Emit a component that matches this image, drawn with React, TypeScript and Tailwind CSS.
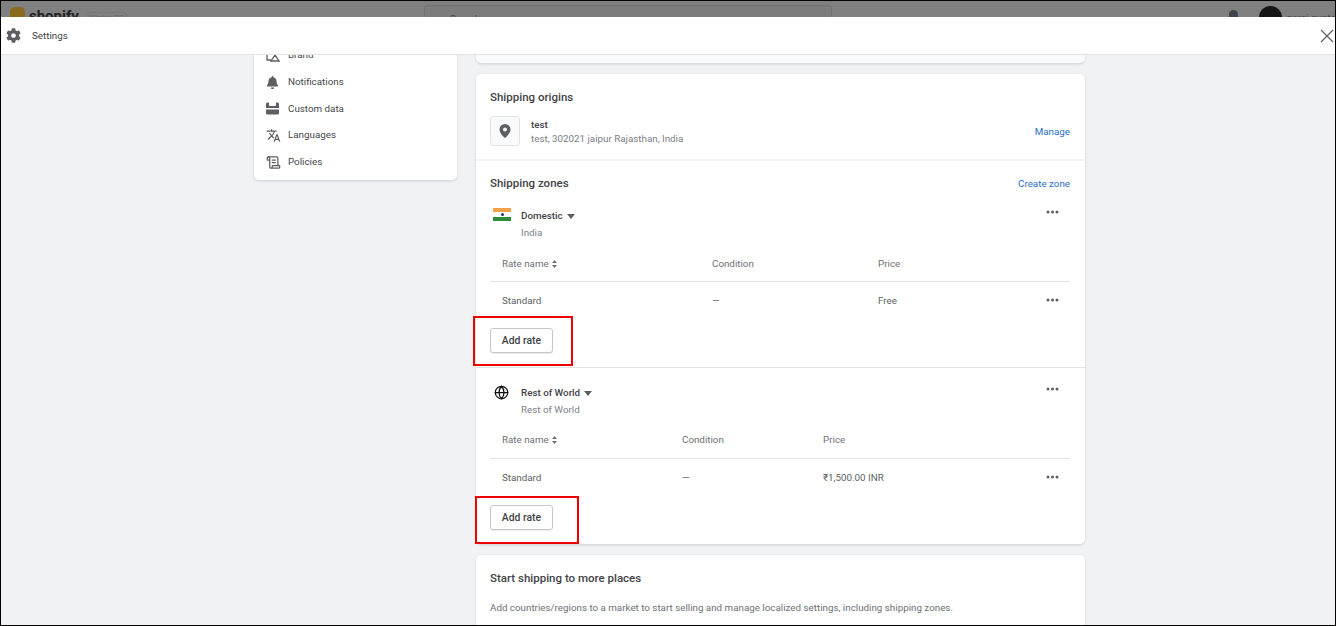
import { Globe, ScrollText } from 'lucide-react';
import { FaBell, FaCog } from 'react-icons/fa';
import { MdTranslate } from 'react-icons/md';
import type { ReactNode } from 'react';

function MoreDots() {
  return (
    <svg width="13" height="4" viewBox="0 0 13 4" className="fill-[#5c5f62]">
      <circle cx="2" cy="2" r="1.5" />
      <circle cx="6.5" cy="2" r="1.5" />
      <circle cx="11" cy="2" r="1.5" />
    </svg>
  );
}

function Caret() {
  return (
    <svg width="8" height="5" viewBox="0 0 8 5" className="fill-[#5c5f62]">
      <path d="M0 0h8L4 5z" />
    </svg>
  );
}

function SortIcon() {
  return (
    <svg width="5" height="8" viewBox="0 0 5 8" className="fill-[#6d7175]">
      <path d="M2.5 0L5 3H0zM0 5h5L2.5 8z" />
    </svg>
  );
}

function NavItem({ icon, label }: { icon: ReactNode; label: string }) {
  return (
    <div className="flex h-[26.7px] items-center">
      <div className="flex w-[34px] justify-start pl-[12px]">{icon}</div>
      <span>{label}</span>
    </div>
  );
}

function Flag() {
  return (
    <div className="ml-[3px] flex h-[13px] w-[18px] flex-col">
      <div className="h-[4px] bg-[#f5a04a]" />
      <div className="flex h-[5px] items-center justify-center bg-white">
        <div className="h-[3px] w-[3px] rounded-full bg-[#26327a]" />
      </div>
      <div className="h-[4px] bg-[#2e8b3a]" />
    </div>
  );
}

function Zone(props: {
  icon: ReactNode;
  name: string;
  sub: string;
  condX: string;
  priceX: string;
  price: string;
  headPad: string;
  last?: boolean;
}) {
  return (
    <div className={props.last ? 'pl-[14px] pr-[15px] pt-[16px]' : 'border-b border-[#e1e3e5] pl-[14px] pr-[15px] pt-[16px]'}>
      <div className="flex items-start">
        <div className="w-[31px] pt-[1px]">{props.icon}</div>
        <div className="flex-1 pt-[1px]">
          <div className="flex items-center gap-[4px] font-medium text-[#3f4246]">
            {props.name} <Caret />
          </div>
          <div className="mt-[2px] leading-[14px] text-[#7b8087]">{props.sub}</div>
        </div>
        <div className="pr-[11px] pt-[3px]">
          <MoreDots />
        </div>
      </div>
      <div className={props.headPad + ' mt-[15px] flex h-[27px] items-start border-b border-[#e1e3e5] pl-[12px] text-[#6d7175]'}>
        <div className={props.condX + ' flex items-center gap-[3px]'}>
          Rate name <SortIcon />
        </div>
        <div className={props.priceX}>Condition</div>
        <div>Price</div>
      </div>
      <div className="flex h-[37px] items-center pl-[12px] text-[#5c5f62]">
        <div className={props.condX}>Standard</div>
        <div className={props.priceX}>—</div>
        <div className="flex-1">{props.price}</div>
        <div className="pb-[2px] pr-[11px]">
          <MoreDots />
        </div>
      </div>
      <div className="flex h-[48px] items-start pt-[9px]">
        <button className="h-[25px] w-[63px] rounded-[3px] border border-[#c4c8cc] bg-white text-[10.4px] font-medium text-[#3f4246] shadow-[0_1px_0_rgba(0,0,0,0.08)]">
          Add rate
        </button>
      </div>
    </div>
  );
}

export default function App() {
  return (
    <div className="flex h-[626px] w-[1336px] flex-col overflow-hidden border border-black bg-[#f1f2f4] font-['Roboto',sans-serif] text-[9.8px] leading-[16px]">
      {/* dimmed admin bar behind the modal */}
      <div className="relative h-[16px] shrink-0 overflow-hidden bg-[#808080]">
        <div className="absolute left-[9px] top-[6px] h-[14px] w-[15px] rounded-t-[5px] bg-[#8a6a1e]" />
        <div className="absolute left-[28px] top-[7px] text-[15px] font-bold text-[#222]">shopify</div>
        <div className="absolute left-[84px] top-[11px] h-[12px] w-[43px] rounded-full border border-[#777] text-center text-[8px] leading-[10px] text-[#666]">Winter '22</div>
        <div className="absolute left-[423px] top-[4px] h-[20px] w-[408px] rounded-[3px] border border-[#717171] bg-[#7c7c7c] pl-[25px] leading-[26px] text-[#444]">Search</div>
        <div className="absolute left-[1228px] top-[9px] h-[9px] w-[9px] rounded-t-full bg-[#3f444c]" />
        <div className="absolute left-[1258px] top-[5px] h-[23px] w-[23px] rounded-full bg-[#151515]" />
        <div className="absolute left-[1286px] top-[9px] whitespace-nowrap text-[#444]">parsi gupta</div>
      </div>

      {/* settings header */}
      <div className="flex h-[38px] shrink-0 items-center justify-between border-b border-[#e1e3e5] bg-white pl-[5px] pr-[1px]">
        <div className="flex items-center gap-[11px] text-[#3f4246]">
          <FaCog size={15} className="text-[#5c5f62]" />
          <span className="pt-[1px]">Settings</span>
        </div>
        <svg width="14" height="14" viewBox="0 0 14 14" fill="none" stroke="#5c5f62" strokeWidth="1.2">
          <path d="M1 1l12 12M13 1L1 13" />
        </svg>
      </div>

      <div className="flex min-h-0 flex-1 justify-center gap-[19px] overflow-hidden pl-[3px]">
        <div className="-mt-[20px] h-[145px] w-[203px] rounded-b-[5px] bg-white pt-[7px] text-[#44484d] shadow-[0_1px_3px_rgba(0,0,0,0.15)]">
          <NavItem
            icon={
              <svg width="14" height="14" viewBox="0 0 14 14" fill="none" stroke="#5c5f62" strokeWidth="1.3">
                <path d="M1 2h8v4M1 2v10h4M9 7l4 6H5z" />
              </svg>
            }
            label="Brand"
          />
          <NavItem icon={<FaBell size={13} className="text-[#5c5f62]" />} label="Notifications" />
          <NavItem
            icon={
              <svg width="13" height="13" viewBox="0 0 13 13" className="fill-[#5c5f62]">
                <path d="M0 2a1.5 1.5 0 011.5-1.5H3V3a1 1 0 001 1h5a1 1 0 001-1V.5h1.500A1.500 1.500 0 0113 2v4H0zM0 7.500h13v3.500a1.500 1.500 0 01-1.500 1.500h-10A1.500 1.500 0 010 11z" />
              </svg>
            }
            label="Custom data"
          />
          <NavItem icon={<MdTranslate size={15} className="text-[#5c5f62]" />} label="Languages" />
          <NavItem icon={<ScrollText size={15} strokeWidth={2} className="text-[#5c5f62]" />} label="Policies" />
        </div>

        <div className="-mt-[20px] flex w-[609px] flex-col gap-[11px]">
          <div className="h-[28px] shrink-0 rounded-b-[5px] bg-[#f9fafb] shadow-[0_1px_3px_rgba(0,0,0,0.15)]" />
          <div className="shrink-0 rounded-[5px] bg-white shadow-[0_1px_3px_rgba(0,0,0,0.15)]">
            <div className="border-b-2 border-[#f1f2f4] pb-[13px] pl-[14px] pr-[15px] pt-[15px]">
              <div className="text-[11.5px] font-medium text-[#3f4246]">Shipping origins</div>
              <div className="mt-[11px] flex items-center">
                <div className="flex h-[30px] w-[30px] items-center justify-center rounded-[3px] border border-[#e1e3e5] bg-[#f9fafb]">
                  <svg width="12" height="14" viewBox="0 0 12 14" className="fill-[#5c5f62]">
                    <path fillRule="evenodd" d="M6 0a5.500 5.500 0 00-5.500 5.500C.5 9 4.800 13.300 6 14c1.200-.7 5.500-5 5.500-8.500A5.500 5.500 0 006 0zm0 7.500a2 2 0 110-4 2 2 0 010 4z" />
                  </svg>
                </div>
                <div className="ml-[11px] flex-1 pt-[1px] leading-[14px]">
                  <div className="font-medium text-[#3f4246]">test</div>
                  <div className="text-[#7b8087]">test, 302021 jaipur Rajasthan, India</div>
                </div>
                <span className="pt-[1px] text-[#2c6ecb]">Manage</span>
              </div>
            </div>
            <div className="flex h-[30px] items-center justify-between pl-[14px] pr-[15px] pt-[14px]">
              <div className="text-[11.5px] font-medium text-[#3f4246]">Shipping zones</div>
              <span className="pt-[2px] text-[#2c6ecb]">Create zone</span>
            </div>
            <Zone icon={<Flag />} name="Domestic" sub="India" condX="w-[210px]" priceX="w-[166px]" price="Free" headPad="pt-[1px]" />
            <Zone
              icon={<Globe size={15} strokeWidth={2} className="ml-[4px] text-[#111]" />}
              name="Rest of World"
              sub="Rest of World"
              condX="w-[180px]"
              priceX="w-[141px]"
              price="₹1,500.00 INR"
              headPad="pt-0"
              last
            />
          </div>
          <div className="shrink-0 rounded-[5px] bg-white px-[14px] pt-[15px] shadow-[0_1px_3px_rgba(0,0,0,0.15)]">
            <div className="text-[11.5px] font-medium text-[#3f4246]">Start shipping to more places</div>
            <div className="mt-[14px] h-[60px] text-[#6d7175]">
              Add countries/regions to a market to start selling and manage localized settings, including shipping zones.
            </div>
          </div>
        </div>
      </div>

      {/* red annotation boxes */}
      <div className="absolute left-[473px] top-[316px] h-[50px] w-[100px] border-2 border-[#ee0000]" />
      <div className="absolute left-[475px] top-[496px] h-[48px] w-[104px] border-2 border-[#ee0000]" />
    </div>
  );
}
